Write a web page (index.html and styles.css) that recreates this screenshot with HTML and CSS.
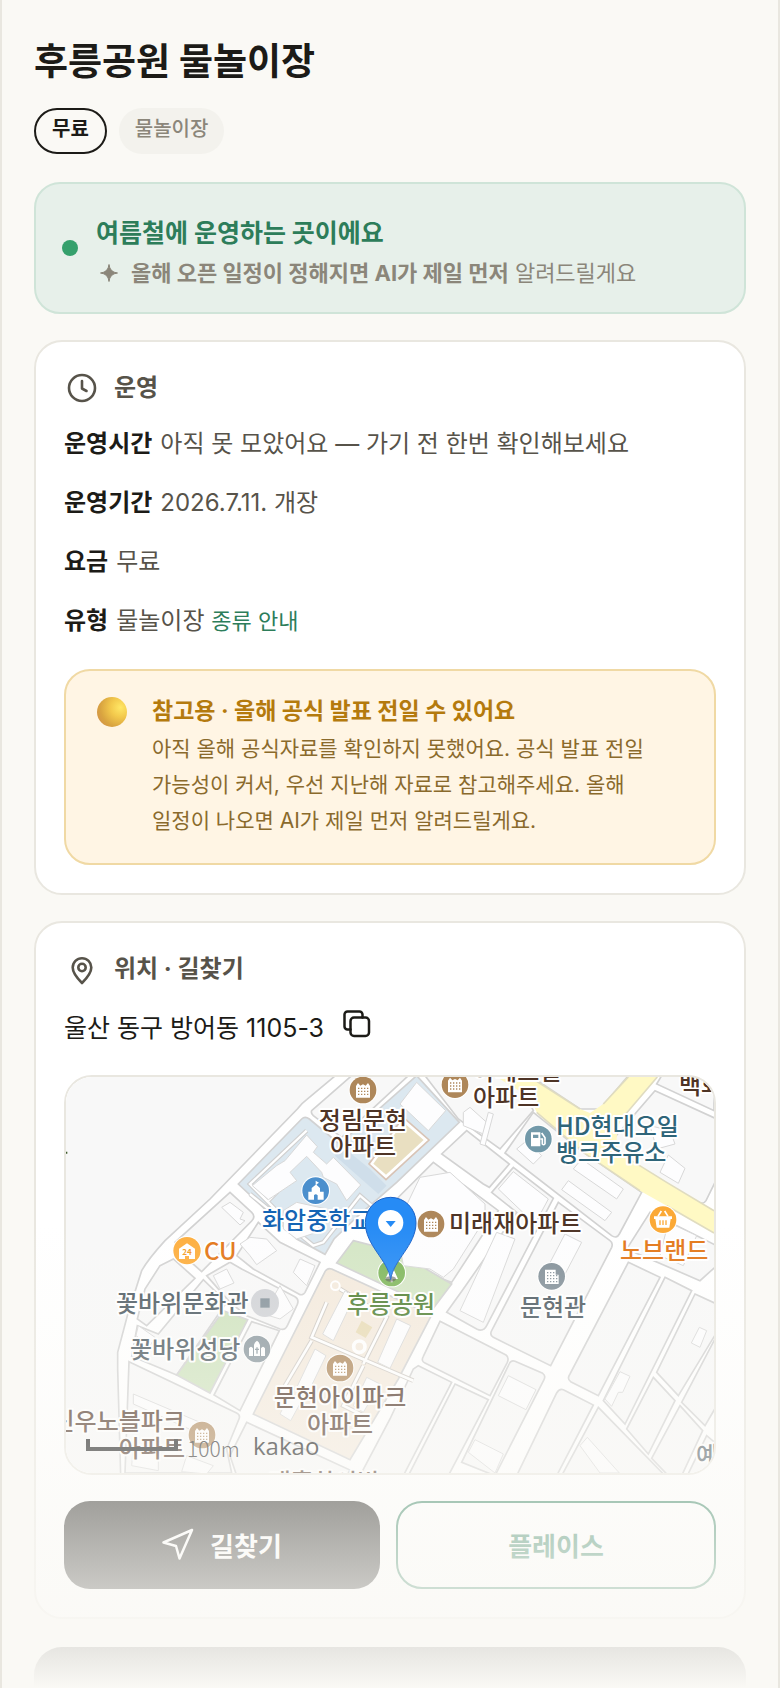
FILE: index.html
```html
<!DOCTYPE html>
<html lang="ko">
<head>
<meta charset="utf-8">
<meta name="viewport" content="width=device-width, initial-scale=1">
<title>후릉공원 물놀이장</title>
<link rel="stylesheet" href="styles.css">
</head>
<body>
<main class="page">
  <header class="head">
    <h1 class="title">후릉공원 물놀이장</h1>
    <div class="chips">
      <span class="chip chip-outline">무료</span>
      <span class="chip chip-soft">물놀이장</span>
    </div>
  </header>

  <section class="banner">
    <span class="banner-dot"></span>
    <div class="banner-body">
      <p class="banner-title">여름철에 운영하는 곳이에요</p>
      <p class="banner-sub">
        <svg class="spark" viewBox="0 0 20 20" aria-hidden="true"><path d="M10 1.500Q10.800 9.200 18.500 10Q10.800 10.800 10 18.500Q9.200 10.800 1.500 10Q9.200 9.200 10 1.500Z" fill="currentColor" stroke="currentColor" stroke-linejoin="round"/></svg>
        <span><b>올해 오픈 일정이 정해지면 AI가 제일 먼저</b> 알려드릴게요</span>
      </p>
    </div>
  </section>

  <section class="card">
    <h2 class="card-head">
      <svg class="head-icon" viewBox="0 0 36 36" fill="none" stroke="currentColor" stroke-width="2.600" stroke-linecap="round" stroke-linejoin="round" aria-hidden="true"><circle cx="18" cy="18" r="13"/><path d="M18 11v7.500l4.500 2.500"/></svg>
      운영
    </h2>
    <dl class="facts">
      <div class="fact"><dt>운영시간</dt><dd>아직 못 모았어요 — 가기 전 한번 확인해보세요</dd></div>
      <div class="fact"><dt>운영기간</dt><dd>2026.7.11. 개장</dd></div>
      <div class="fact"><dt>요금</dt><dd>무료</dd></div>
      <div class="fact"><dt>유형</dt><dd>물놀이장 <a class="guide" href="#guide">종류 안내</a></dd></div>
    </dl>
    <aside class="notice">
      <span class="notice-ball"></span>
      <div>
        <h3 class="notice-title">참고용 · 올해 공식 발표 전일 수 있어요</h3>
        <p class="notice-text">아직 올해 공식자료를 확인하지 못했어요. 공식 발표 전일 가능성이 커서, 우선 지난해 자료로 참고해주세요. 올해 일정이 나오면 AI가 제일 먼저 알려드릴게요.</p>
      </div>
    </aside>
  </section>

  <section class="card">
    <h2 class="card-head">
      <svg class="head-icon" viewBox="0 0 36 36" fill="none" stroke="currentColor" stroke-width="2.600" stroke-linejoin="round" aria-hidden="true"><path d="M18 32C14 28 8.700 22.500 8.700 16.500a9.300 9.300 0 0 1 18.600 0C27.300 22.500 22 28 18 32Z"/><circle cx="18" cy="16.500" r="3.700"/></svg>
      위치 · 길찾기
    </h2>
    <div class="address">
      <span>울산 동구 방어동 1105-3</span>
      <button class="copy" type="button" aria-label="주소 복사">
        <svg viewBox="0 0 30 30" fill="none" stroke="currentColor" stroke-width="2.500" stroke-linejoin="round" stroke-linecap="round" aria-hidden="true"><rect x="8.500" y="8.500" width="18.500" height="18.500" rx="3.500"/><path d="M8.500 20.500H5.500a3 3 0 0 1-3-3V5.500a3 3 0 0 1 3-3h12a3 3 0 0 1 3 3v3"/></svg>
      </button>
    </div>

    <div class="map">
      <svg class="map-art" viewBox="0 0 648 396" preserveAspectRatio="xMidYMid slice" role="img" aria-label="후릉공원 주변 지도">
        <defs>
          <g id="apt"><circle r="43" fill="#fff"/><circle r="40" fill="#ae875a"/><path d="M-21 23V-12L-15-21L-8-13L0-17L8-13L15-21L21-12V23Z" fill="#fff"/><path d="M-15-5h32M-15 4h32M-15 13h32" stroke="#ae875a" stroke-width="4" stroke-dasharray="4 5"/></g>
        </defs>
        <g transform="scale(.333333) translate(-48 -24)">
          <rect x="48" y="24" width="1944" height="1188" fill="#fff"/>
          <g class="block">
            <path d="M40 10H868L770 92Q755 103 742 120L480 390L345 515Q295 570 275 605L232 740L203 850V900L212 1220H40Z"/>
            <path d="M540 370L605 430Q618 443 605 456L455 608L385 545L375 520Z"/>
            <path d="M330 590L370 570L435 628L290 770L262 750L285 660Z"/>
            <path d="M245 862L262 770L325 795L460 632L530 700L380 918Z"/>
            <path d="M605 758L688 785L570 1025L492 978Z"/>
            <path d="M470 620L540 580L575 600L735 683Q748 690 742 706L712 770Q705 785 690 780L590 740L540 700Z"/>
            <path d="M625 460L690 520L810 580L765 670Q758 682 745 674L610 600L560 560Z"/>
            <path d="M237 878L560 1032Q572 1038 567 1050L530 1140L545 1212H225Z"/>
            <path d="M785 125L905 20H1075L875 205L790 140Q782 133 785 125Z"/>
            <path d="M590 1060L900 1203L890 1220H560L540 1160Z"/>
            <path d="M1125 20H1400L1450 125L1350 240L1225 150Z"/>
            <path d="M1175 255L1250 185L1378 285L1318 355L1300 345Z"/>
            <path d="M1040 390L1150 280L1345 425L1205 640L1090 600Z"/>
            <path d="M1390 295L1510 388L1310 770Q1300 790 1280 780L1190 730L1240 660L1400 430L1325 370Z"/>
            <path d="M1525 400L1680 515Q1690 522 1685 535L1502 890L1330 805Q1318 798 1325 785Z"/>
            <path d="M1365 252L1450 130L1600 250L1775 370L1708 495Q1700 510 1685 500Z"/>
            <path d="M1440 20H1735L1650 120L1590 120Z"/>
            <path d="M1835 20H1992V125L1820 45Z"/>
            <path d="M1815 65L2000 150V330L1968 395Q1960 408 1945 400L1870 360L1700 250L1690 210Z"/>
            <path d="M1800 430L2000 530V590L1950 635L1730 540Z"/>
            <path d="M1735 580L1830 625L1645 980L1562 938Q1550 930 1560 915Z"/>
            <path d="M1845 625L1925 665L1725 1065L1660 995Z"/>
            <path d="M1935 675L2000 705V790L1885 980L1820 910Z"/>
            <path d="M1810 925L1875 995L1795 1155L1730 1080Z"/>
            <path d="M2000 800V1010L1965 1070L1895 1000Z"/>
            <path d="M1890 1010L1958 1085L1895 1220H1855L1805 1168Z"/>
            <path d="M1970 1100L2000 1125V1220H1912Z"/>
            <path d="M1645 1015L1845 1220H1535Z"/>
            <path d="M1540 962L1630 1008L1520 1220H1400L1520 972Q1528 958 1540 962Z"/>
            <path d="M1395 877L1478 913Q1488 920 1482 932L1335 1220L1235 1180L1375 890Q1382 872 1395 877Z"/>
            <path d="M1170 757L1368 858Q1378 865 1372 880L1320 980L1125 882Q1112 876 1120 862Z"/>
            <path d="M1215 945L1315 992L1195 1220H1075Z"/>
            <path d="M1105 890L1205 940L1060 1220H930L1020 1050L1090 900Z"/>
          </g>
          <path d="M565 345L755 150Q765 140 778 150L868 225L1100 20L1228 160L1040 340L925 440L852 510L825 556L740 510Z" fill="#dce8f0" stroke="#d2d2d2" stroke-width="5"/>
          <path d="M868 225L960 300L1010 350L985 375L855 260Z" fill="#cfdeea"/>
          <path d="M1060 145L1137 213L1008 332L957 285Z" fill="#fff" stroke="#d8c3b5" stroke-width="5"/>
          <path d="M1060 160L1121 213L1008 317L970 284Z" fill="#e9dfc1"/>
          <path d="M770 185L600 345L685 430M715 335L655 395M600 375L790 530L820 520L930 380L1000 440" fill="none" stroke="#d0d0d0" stroke-width="14"/>
          <path d="M770 185L600 345L685 430M715 335L655 395M600 375L790 530L820 520L930 380L1000 440" fill="none" stroke="#fff" stroke-width="7"/>
          <g class="house">
            <path d="M770 198L802 233L790 250L830 285L850 265L932 348L890 395L860 345L820 325L815 310L770 262L720 310L740 335L655 392L607 350L680 290L705 275Z"/>
            <path d="M1050 105L1100 40L1187 125L1135 185Z"/><path d="M700 425L740 400L830 420L800 490L740 510L700 480Z"/>
          </g>
          <path d="M910 515L1040 548L1205 645L1150 718L860 582Z" fill="#d4e6c5" stroke="#d2d2d2" stroke-width="5"/>
          <path d="M520 725L593 752L480 972L380 918Z" fill="#cfe3be" stroke="#d2d2d2" stroke-width="5"/>
          <path d="M845 600L1145 738L1045 930L900 1172L610 1035L825 608Q832 595 845 600Z" fill="#f4eadd" stroke="#d2d2d2" stroke-width="5"/>
          <path d="M830 700L785 805L1090 935M940 890L880 1010L960 1050M785 815L705 950M870 660L1010 745L940 885" fill="none" stroke="#cfcac4" stroke-width="14"/>
          <path d="M830 700L785 805L1090 935M940 890L880 1010L960 1050M785 815L705 950M870 660L1010 745L940 885" fill="none" stroke="#fff" stroke-width="8"/>
          <g class="house">
            <path d="M885 665L912 685L850 815L818 795Z"/><path d="M795 840L828 860L770 980L738 960Z"/><path d="M1040 750L1082 770L1020 898L983 880Z"/><path d="M950 925L990 945L940 1030L910 1010Z"/><path d="M720 975L755 995L722 1055L690 1035Z"/>
            <path d="M515 415L540 400L580 430L570 450L585 455L570 468Z"/><path d="M570 525L600 505L650 510L680 545L620 587L600 560Z"/><path d="M750 570L795 590L770 650L730 610Z"/><path d="M490 620L530 600L552 642L510 660Z"/>
            <path d="M265 770L315 805L300 830L258 800Z"/><path d="M250 975L450 1060L440 1090L250 1005Z"/><path d="M250 1130L325 1160V1205L245 1190Z"/><path d="M410 1160L490 1190L470 1215L395 1208Z"/><path d="M690 650L730 720L690 750L640 735Z"/>
            <path d="M1110 325L1200 310L1305 405V450L1210 600L1180 625L1140 600L1060 590L1040 470Z"/><path d="M1240 130L1260 115L1310 160L1300 195L1240 170Z"/><path d="M1315 130L1330 135L1305 230L1290 225Z"/><path d="M1595 270L1720 360L1700 390L1570 300Z"/><path d="M1555 335L1685 430L1665 455L1535 362Z"/><path d="M1400 240L1430 215L1475 260L1450 285Z"/><path d="M1345 360L1390 308L1495 390L1455 465Z"/><path d="M1340 490L1395 510L1300 760L1230 725Z"/><path d="M1545 495L1595 520L1540 625L1490 600Z"/><path d="M1855 258L1905 298L1885 343L1830 310Z"/><path d="M1800 170L1860 185L1875 225L1820 240Z"/><path d="M1855 460L1940 500L1900 590L1830 560Z"/>
            <path d="M1948 775L1970 785L1950 835L1924 822Z"/><path d="M1710 908L1740 922L1718 970L1705 970L1685 1012L1665 990Z"/><path d="M1612 1105L1708 1212H1650L1590 1130Z"/><path d="M1375 920L1458 962L1428 1022L1345 980Z"/><path d="M1275 1112L1360 1155L1335 1212L1255 1150Z"/>
          </g>
          <path d="M935 755L967 775L947 807L917 790Z" fill="#e8dbb5"/>
          <g fill="none" stroke="#fff"><circle cx="856" cy="650" r="13" stroke-width="6"/><circle cx="928" cy="833" r="17" stroke-width="11"/></g>
          <path d="M1340 24H1440L1590 120L1620 132L1660 105L1735 24H1822L1720 140Q1690 185 1705 250L1850 340L1992 425V492L1850 410L1770 365L1600 250L1460 130L1440 85Z" fill="#fff9c4"/>
          <path d="M1440 24L1590 120M1735 24L1660 105M1822 24L1710 155M1705 250L1850 340L1992 425M1992 492L1850 410M1770 365L1600 250L1460 130" fill="none" stroke="#e0dcc0" stroke-width="5"/>
          <path d="M48 248h4v6h-4z" fill="#3c5a2a"/>
          <use href="#apt" x="939" y="63"/><use href="#apt" x="1215" y="47"/><use href="#apt" x="1143" y="465"/><use href="#apt" x="870" y="897"/><use href="#apt" x="456" y="1098"/>
          <g transform="translate(797 365)"><circle r="43" fill="#fff"/><circle r="40" fill="#4b8fcd"/><path d="M-22 27V3H-12V-8L0-18V-30L10-24L3-19V-17L13-8V3H24V27H6V14Q0 8-5 14V27Z" fill="#fff"/></g>
          <g transform="translate(411 545)"><circle r="44" fill="#fff"/><circle r="41" fill="#fdae3e"/><path d="M-24 25V-6L0-22L24-6V25H6V16H-6V25Z" fill="#fff"/></g>
          <g transform="translate(1465 210)"><circle r="43" fill="#fff"/><circle r="40" fill="#7299a9"/><path d="M-22-20H6V22H-22Z" fill="#fff"/><path d="M-16-13H0V-3H-16Z" fill="#7299a9"/><path d="M6 0H12V15Q17 20 20 14V-4L10-18" fill="none" stroke="#fff" stroke-width="5"/></g>
          <g transform="translate(1839 452)"><circle r="43" fill="#fff"/><circle r="40" fill="#fba936"/><path d="M-27-10H27V-2H23L19 24H-19L-23-2H-27Z" fill="#fff"/><path d="M-15-10L-5-26M15-10L5-26" stroke="#fff" stroke-width="5"/><path d="M-9 2V16M0 2V16M9 2V16" stroke="#fba936" stroke-width="4"/></g>
          <g transform="translate(1505 622)"><circle r="43" fill="#fff"/><circle r="40" fill="#84919a"/><path d="M-20-20H12V-5H21V23H-20Z" fill="#fff"/><path d="M-14-11H12M-14-2H18M-14 7H18M-14 16H18" stroke="#84919a" stroke-width="4" stroke-dasharray="4 5"/></g>
          <g transform="translate(645 702)"><circle r="42" fill="#d0d2d6"/><path d="M-14-14H14V14H-14Z" fill="#84919a"/></g>
          <g transform="translate(621 840)"><circle r="43" fill="#fff"/><circle r="40" fill="#8b989f"/><path d="M-24 21V-2Q-18-12-12-2V21ZM12 21V-2Q18-12 24-2V21ZM-9 21V-12Q-6-22 0-25Q6-22 9-12V21Z" fill="#fff"/><path d="M0-5V14M-6 1H6" stroke="#8b989f" stroke-width="4"/></g>
          <g transform="translate(1025 612)"><circle r="43" fill="#fff"/><circle r="40" fill="#80b75c"/><path d="M0-24L19 18H3V28H-3V18H-19Z" fill="#fff"/></g>
          <ellipse cx="1022" cy="630" rx="16" ry="8" fill="#555" opacity=".6"/>
        </g>
        <text class="brown mid" x="297" y="52">정림문현</text><text class="brown mid" x="297" y="78">아파트</text>
        <text class="brown" x="407" y="3">아레스빌</text><text class="brown" x="407" y="29">아파트</text>
        <text class="brown" x="613" y="17">백화점</text>
        <text class="teal" x="490" y="58">HD현대오일</text><text class="teal" x="490" y="84">뱅크주유소</text>
        <text class="brown" x="383" y="155">미래재아파트</text>
        <text class="orange" x="554" y="182">노브랜드</text><text class="orange" x="138" y="183">CU</text>
        <text class="slate" x="50" y="235">꽃바위문화관</text><text class="slate" x="64" y="281">꽃바위성당</text>
        <text class="slate mid" x="487" y="239">문현관</text><text class="slate" x="630" y="387">예</text>
        <text class="green mid" x="325" y="236">후릉공원</text>
        <text class="brown mid" x="274" y="329">문현아이파크</text><text class="brown mid" x="274" y="356">아파트</text>
        <text class="brown end" x="119" y="353">신우노블파크</text><text class="brown end" x="119" y="380">아파트</text>
        <text class="brown mid" x="258" y="414">대흥하이빌</text>
        <text class="blue" x="196" y="152">화암중학교</text>
        <text class="tiny" x="121" y="178">24</text>
        <g transform="scale(.333333) translate(-48 -24)"><path d="M1022 632C1014 572 946 530 946 461A76 76 0 0 1 1098 461C1098 530 1030 572 1022 632Z" fill="#268bf5" stroke="#1b62c9" stroke-width="3"/><circle cx="1022" cy="461" r="38" fill="#fff"/><path d="M1007 456H1037L1022 474Z" fill="#268bf5"/></g>
        <path d="M22 362V372H110V362" fill="none" stroke="#111" stroke-width="4"/>
        <text class="scale" x="121" y="380">100m</text>
        <text class="brand" x="187" y="378">kakao</text>
      </svg>
    </div>

    <div class="actions">
      <button class="btn btn-dark" type="button">
        <svg class="btn-icon" viewBox="0 0 32 32" fill="none" stroke="currentColor" stroke-width="2.500" stroke-linejoin="round" aria-hidden="true"><path d="M30 2L1.500 14.500L14 18L17.500 30.500Z"/></svg>
        길찾기
      </button>
      <button class="btn btn-line" type="button">플레이스</button>
    </div>
  </section>

  <div class="next"></div>
  <div class="fade"></div>
</main>
</body>
</html>
```
FILE: styles.css
```css
* { box-sizing: border-box; }
body, h1, h2, h3, p, dl, dd { margin: 0; }
body {
  background: #faf9f5;
  color: #1c1b17;
  font-family: Inter, "Noto Sans CJK KR", sans-serif;
  font-size: 24px;
  word-break: keep-all;
}
button { font: inherit; cursor: pointer; }

.page {
  position: relative;
  display: flex;
  flex-direction: column;
  gap: 26px;
  height: 100vh;
  overflow: hidden;
  padding: 32px 32px 0;
  border: 2px solid #e9e7e0;
  border-width: 0 2px;
}
.page > * { flex-shrink: 0; }

.head { display: flex; flex-direction: column; gap: 16px; padding-bottom: 2px; }
.title { font-size: 37px; line-height: 60px; font-weight: 700; }
.chips { display: flex; gap: 12px; }
.chip { padding: 2px 16px 6px; border-radius: 23px; font-size: 20px; line-height: 38px; }
.chip-outline { padding: 0 16px 4px; border: 2px solid #1c1b17; font-weight: 700; }
.chip-soft { background: #f3f2ed; color: #8b867a; font-weight: 500; }

.banner {
  display: flex;
  align-items: center;
  gap: 18px;
  padding: 20px 26px;
  border: 2px solid #cfe4d8;
  border-radius: 26px;
  background: #e7f0ea;
}
.banner-dot { width: 16px; height: 16px; border-radius: 50%; background: #35a06c; }
.banner-body { padding-top: 8px; }
.banner-title { font-size: 25px; line-height: 42px; font-weight: 700; color: #2d7d5a; }
.banner-sub { display: flex; align-items: center; gap: 12px; font-size: 22px; line-height: 38px; color: #8b867a; }
.spark { width: 20px; height: 20px; margin-left: 3px; }

.card { padding: 28px; border: 2px solid #e9e7e0; border-radius: 28px; background: #fff; }
.card-head { display: flex; align-items: center; gap: 14px; font-size: 24px; line-height: 36px; font-weight: 700; color: #57534a; }
.head-icon { width: 36px; height: 36px; }

.facts { display: flex; flex-direction: column; gap: 19px; padding: 18px 0 28px; }
.fact { display: flex; gap: 8px; line-height: 40px; }
.fact dt { font-weight: 700; }
.fact dd { color: #57534a; }
.guide { color: #2d7d5a; font-size: 22px; line-height: 24px; text-decoration: none; }

.notice {
  display: flex;
  align-items: flex-start;
  gap: 25px;
  padding: 20px 50px 24px 31px;
  border: 2px solid #f0d9a4;
  border-radius: 26px;
  background: #fff5e4;
}
.notice-ball {
  flex: none;
  width: 30px;
  height: 30px;
  margin-top: 6px;
  border-radius: 50%;
  background: radial-gradient(circle at 78% 35%, #ffe766 0, #f3c94c 32%, #d9a440 65%, #d0884c 100%);
}
.notice-title { font-size: 23px; line-height: 40px; font-weight: 700; color: #b47a0d; }
.notice-text { font-size: 21px; line-height: 36px; color: #8a6a2c; }

.address { display: flex; align-items: center; gap: 18px; padding: 16px 0 22px; font-size: 25px; line-height: 50px; }
.copy { display: flex; padding: 0 0 8px; border: 0; background: none; color: #1c1b17; }
.copy svg { width: 30px; height: 30px; }

.map { overflow: hidden; border: 2px solid #e9e7e0; border-radius: 28px; height: 400px; }
.map-art { display: block; width: 100%; height: 100%; font-family: "Noto Sans CJK KR", sans-serif; font-size: 24px; font-weight: 500; }
.map-art text { stroke: #fff; stroke-width: 4px; stroke-linejoin: round; paint-order: stroke; }
.block path { fill: #f8f8f8; stroke: #d2d2d2; stroke-width: 5px; }
.house path { fill: #fdfdfe; stroke: #d8d8d8; stroke-width: 3px; }
.mid { text-anchor: middle; }
.end { text-anchor: end; }
.brown { fill: #4e3426; }
.teal { fill: #2f6579; }
.orange { fill: #e37718; }
.slate { fill: #4c5961; }
.green { fill: #4f7f32; }
.blue { fill: #1565b5; }
.map-art .tiny { fill: #f39a20; stroke: none; font-size: 8px; font-weight: 700; text-anchor: middle; }
.map-art .scale { fill: #222; stroke: none; font-size: 21px; font-weight: 300; }
.map-art .brand { fill: #111; stroke: none; font-family: "Open Sans", sans-serif; font-size: 24px; font-weight: 500; }

.actions { display: flex; gap: 16px; padding-top: 26px; }
.btn {
  flex: 1 1 0;
  display: flex;
  align-items: center;
  justify-content: center;
  gap: 16px;
  height: 88px;
  padding: 0 0 2px;
  border: 0;
  border-radius: 26px;
  font-size: 26px;
  font-weight: 700;
}
.btn-dark { background: #1c1b17; color: #fff; }
.btn-line { border: 2px solid #2d7d5a; background: #fff; color: #2d7d5a; }
.btn-icon { width: 32px; height: 32px; }

.next { height: 120px; margin-top: 2px; border-radius: 28px; background: #1c1b17; }
.fade {
  position: absolute;
  right: 0;
  bottom: 0;
  left: 0;
  height: 464px;
  background: linear-gradient(rgba(250, 249, 245, 0), #faf9f5);
  pointer-events: none;
}
```
